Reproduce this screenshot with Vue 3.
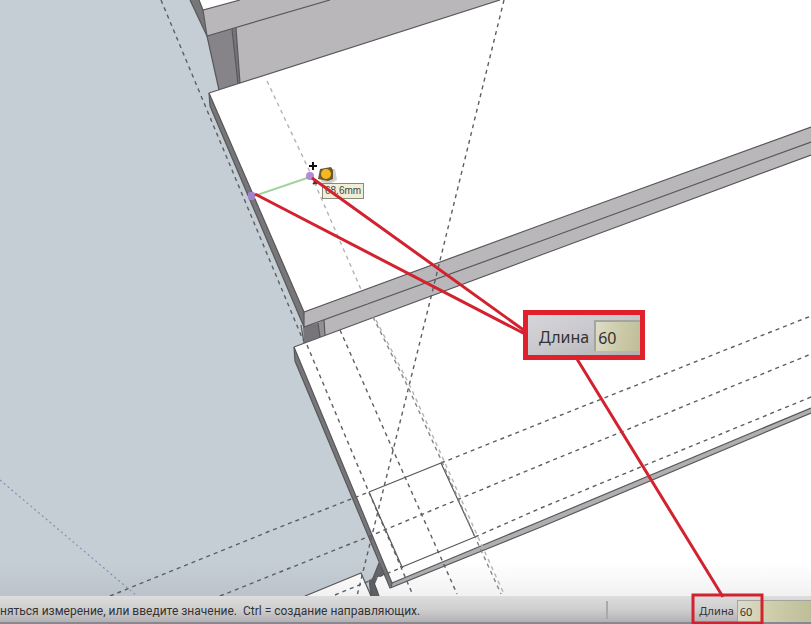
<template>
  <div class="workspace">
    <main class="viewport">
      <svg class="scene" viewBox="0 0 811 596" preserveAspectRatio="xMidYMid slice" aria-hidden="true">
        <defs>
          <linearGradient id="floorShade" x1="0" y1="0" x2="0" y2="1">
            <stop offset="0" stop-color="#555" stop-opacity="0" />
            <stop offset="1" stop-color="#555" stop-opacity="0.08" />
          </linearGradient>
        </defs>

        <rect width="811" height="596" fill="#c5cdd5" />

        <!-- Faces -->
        <polygon
          v-for="(face, i) in faces"
          :key="'face' + i"
          :points="face.points"
          :fill="face.fill"
        />
        <rect y="562" width="811" height="34" fill="url(#floorShade)" />

        <!-- Edges -->
        <polyline
          v-for="(edge, i) in edges"
          :key="'edge' + i"
          :points="edge"
          class="edge"
        />

        <!-- Guides -->
        <polyline
          v-for="(guide, i) in guides"
          :key="'guide' + i"
          :points="guide.points"
          :class="['guide', guide.kind]"
        />

        <!-- Tape measure -->
        <path d="M254 196 L310 177" class="measure" />
        <rect x="248" y="192" width="7" height="8" rx="2" fill="#a184c8" />
        <circle cx="310" cy="176" r="4" fill="#b48ad6" />
        <path d="M309 166 H317 M313 162 V170" stroke="#111" stroke-width="2" />
        <path d="M313 184 l4 -3 M314 181 l3 3" stroke="#333" stroke-width="2" />
        <path d="M322 170 L335 169 L337 180 L330 184 L321 182 Z" fill="#999" opacity="0.45" />
        <path d="M320 169 L331 167 L333 170 L333 179 L328 181 L318 179 Z" fill="#6b5b2c" />
        <circle cx="326" cy="174" r="5" fill="#f7b81f" />
      </svg>
      <div class="tooltip">68.6mm</div>
    </main>

    <footer class="statusbar">
      <p class="hint">{{ hint }}</p>
      <div class="measurement">
        <label for="length">Длина</label>
        <input id="length" v-model="length" type="text" />
      </div>
    </footer>

    <svg class="pointers" viewBox="0 0 811 624" preserveAspectRatio="xMidYMid slice" aria-hidden="true">
      <path d="M255 194 L525 334 M312 178 L525 331 M577 359 L723 597" />
      <rect x="693" y="595" width="69" height="28" />
    </svg>

    <div class="callout">
      <label for="length-large">Длина</label>
      <input id="length-large" v-model="length" type="text" />
    </div>
  </div>
</template>

<script setup>
import { ref } from 'vue'

const length = ref('60')
const hint = 'няться измерение, или введите значение.\u00a0 Ctrl = создание направляющих.'

const faces = [
  // upper step
  { points: '199,0 240,0 203,10', fill: '#ffffff' },
  { points: '190,0 199,0 203,10 207,36', fill: '#77777a' },
  { points: '203,10 240,0 330,0 207,36', fill: '#b9b7ba' },
  { points: '207,36 232,29 239,83 219,90', fill: '#868488' },
  { points: '232,29 236,28 241,83 238,84', fill: '#77757a' },
  { points: '236,28 330,0 500,0 240,83', fill: '#b9b7ba' },
  // middle step
  { points: '209,93 500,0 811,0 811,128 304,312', fill: '#ffffff' },
  { points: '209,93 304,312 304,327 210,106', fill: '#77777a' },
  { points: '304,312 541,225 811,127 811,155 541,255 304,343', fill: '#b9b7ba' },
  { points: '303,327 318,323 320,337 304,343', fill: '#77757a' },
  { points: '318,323 324,320 325,335 320,337', fill: '#929094' },
  // lower step
  { points: '294,347 541,255 811,155 811,596 370,596 392,584', fill: '#ffffff' },
  { points: '294,347 392,583 390,588 295,361', fill: '#77777a' },
  { points: '392,583 541,521 811,408 811,413 541,527 391,588', fill: '#b0aeb1' },
  { points: '305,596 361,573 371,596', fill: '#ffffff' },
  { points: '361,573 371,596 372,580 390,588 377,556', fill: '#c5cdd5' },
  { points: '372,579 383,573 390,588 380,594', fill: '#ffffff' },
  { points: '369,580 378,577 375,584 379,596 370,596', fill: '#606064' },
  { points: '379,563 385,574 373,578', fill: '#66666a' }
]

const edges = [
  '190,0 207,36 330,0',
  '199,0 203,10 240,0',
  '203,10 207,36',
  '207,36 219,90',
  '232,29 238,84',
  '236,28 240,83',
  '209,93 500,0',
  '209,93 304,312 541,225 811,127',
  '209,93 210,106 304,327 541,241 811,142',
  '304,312 304,327',
  '301,325 304,343',
  '318,323 320,337',
  '324,320 325,335',
  '294,347 541,255 811,155',
  '294,347 392,583 541,521 811,408',
  '294,347 295,361 390,588 541,527 811,413',
  '392,583 391,588',
  '369,492 441,463 475,537 402,567 369,492',
  '305,596 361,573 371,596',
  '369,580 372,596',
  '372,578 379,596',
  '379,563 373,578 385,574'
]

const guides = [
  { points: '161,0 303,340', kind: 'dark' },
  { points: '504,0 432,293 357,596', kind: 'dark' },
  { points: '307,345 368,490 412,593', kind: 'dark' },
  { points: '340,330 393,450 457,594', kind: 'dark' },
  { points: '110,596 270,531 369,492', kind: 'dark' },
  { points: '441,463 541,423 811,316', kind: 'dark' },
  { points: '220,596 370,536 541,465 811,354', kind: 'dark' },
  { points: '335,595 403,567', kind: 'dark' },
  { points: '475,537 541,508 811,397', kind: 'dark' },
  { points: '267,81 309,170 373,317', kind: 'light' },
  { points: '373,317 408,387 442,462 475,537 501,594', kind: 'mid' },
  { points: '376,320 411,388 445,463 478,537 504,594', kind: 'light' },
  { points: '0,480 137,596', kind: 'axis' }
]
</script>

<style>
body {
  margin: 0;
}
</style>

<style scoped>
.workspace {
  position: relative;
  display: flex;
  flex-direction: column;
  min-height: 100vh;
  overflow: hidden;
  font-family: "Noto Sans", "Open Sans", sans-serif;
  color: #333;
}

.viewport {
  position: relative;
  flex: 1;
  background: #c5cdd5;
}

.scene,
.pointers {
  position: absolute;
  inset: 0;
  width: 100%;
  height: 100%;
}

.edge {
  fill: none;
  stroke: #58585b;
  stroke-width: 1.2;
}

.guide {
  fill: none;
  stroke-dasharray: 4 4;
}

.guide.dark {
  stroke: #5c5f64;
  stroke-width: 1.4;
}

.guide.mid {
  stroke: #85868a;
  stroke-width: 1.4;
}

.guide.light {
  stroke: #b4b4b4;
  stroke-width: 1.4;
}

.guide.axis {
  stroke: #7d94b5;
  stroke-width: 1.2;
  stroke-dasharray: 2 3;
}

.measure {
  stroke: #a0d3a0;
  stroke-width: 2;
}

.tooltip {
  position: absolute;
  left: 322px;
  top: 183px;
  padding: 0 2px;
  border: 1px solid #8b8b78;
  background: #f0eed6;
  color: #444;
  font-family: "Liberation Sans", sans-serif;
  font-size: 10px;
  line-height: 14px;
}

.statusbar {
  display: flex;
  align-items: stretch;
  height: 26px;
  border-bottom: 2px solid #868a90;
  background: linear-gradient(#dedddd, #d0cfd0 50%, #b3b1b3);
  font-size: 11px;
}

.hint {
  flex: 1;
  margin: 5px 0 3px;
  border-right: 2px solid #aaa8aa;
  font-family: Roboto, "Noto Sans", sans-serif;
  font-size: 12px;
  line-height: 20px;
  white-space: pre;
}

.measurement {
  display: flex;
  align-items: center;
  gap: 3px;
  width: 25%;
  padding-left: 91px;
  box-sizing: border-box;
}

.measurement label {
  line-height: 20px;
  padding-top: 4px;
}

.measurement input,
.callout input {
  flex: 1;
  min-width: 0;
  margin: 0;
  border: solid #a5a5a0;
  border-width: 1px 0 0 1px;
  background: linear-gradient(100deg, #dddccb, #d0cfae 40%, #bebd98);
  color: inherit;
  font: inherit;
  outline: none;
}

.measurement input {
  height: 22px;
  padding: 0 0 0 2px;
  align-self: flex-end;
  box-sizing: border-box;
}

.pointers {
  pointer-events: none;
}

.pointers path,
.pointers rect {
  fill: none;
  stroke: #d3222f;
  stroke-width: 3;
}

.callout {
  position: absolute;
  left: 523px;
  top: 310px;
  display: flex;
  align-items: center;
  gap: 5px;
  width: 122px;
  height: 50px;
  padding: 5px 0 4px 11px;
  box-sizing: border-box;
  border: 5px solid #e0202b;
  background: linear-gradient(160deg, #d6d6da, #c8c8cc 50%, #b0b0b0);
  font-size: 16px;
}

.callout label {
  padding-top: 2px;
}

.callout input {
  align-self: stretch;
  padding: 2px 0 0 2px;
  border-width: 2px 0 0 2px;
}
</style>
